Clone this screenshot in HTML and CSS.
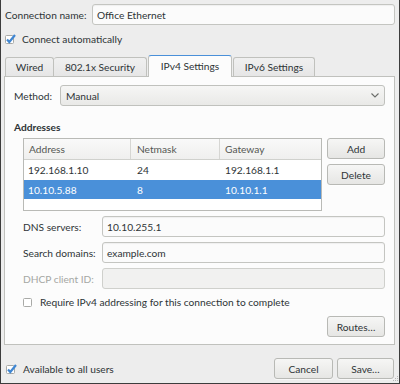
FILE: index.html
```html
<!DOCTYPE html>
<html>
<head>
<meta charset="utf-8">
<link rel="stylesheet" href="styles.css">
</head>
<body>
<div class="win">
  <div class="name-row">
    <span class="name-lbl">Connection name:</span>
    <div class="entry">Office Ethernet</div>
  </div>
  <div class="check-row top-check">
    <span class="cb"><svg width="12" height="12" viewBox="0 0 12 12"><rect x="0.5" y="2.5" width="8" height="8" rx="1" fill="#fff" stroke="#a9aaa7"/><path d="M2 6.5 L4.3 9 L10 2" fill="none" stroke="#3f86d2" stroke-width="2.2"/></svg></span>
    <span>Connect automatically</span>
  </div>
  <div class="tabs">
    <div class="tab t-wired">Wired</div>
    <div class="tab t-sec">802.1x Security</div>
    <div class="tab active t-ipv4">IPv4 Settings</div>
    <div class="tab t-ipv6">IPv6 Settings</div>
  </div>
  <div class="panel">
    <div class="method-row">
      <span class="method-lbl">Method:</span>
      <div class="combo">
        <span>Manual</span>
        <svg width="8" height="5" viewBox="0 0 8 5"><path d="M0.5 0.5 L4 4 L7.5 0.5" fill="none" stroke="#6b6d6a" stroke-width="1.1"/></svg>
      </div>
    </div>
    <div class="section-title">Addresses</div>
    <div class="addr">
      <div class="table">
        <div class="trow thead"><div class="c c1">Address</div><div class="c c2">Netmask</div><div class="c c3">Gateway</div></div>
        <div class="trow r1"><div class="c c1">192.168.1.10</div><div class="c c2">24</div><div class="c c3">192.168.1.1</div></div>
        <div class="trow r2 sel"><div class="c c1">10.10.5.88</div><div class="c c2">8</div><div class="c c3">10.10.1.1</div></div>
      </div>
      <div class="side-btns">
        <div class="btn">Add</div>
        <div class="btn">Delete</div>
      </div>
    </div>
    <div class="field-row">
      <span class="flbl">DNS servers:</span>
      <div class="entry">10.10.255.1</div>
    </div>
    <div class="field-row">
      <span class="flbl">Search domains:</span>
      <div class="entry">example.com</div>
    </div>
    <div class="field-row disabled">
      <span class="flbl">DHCP client ID:</span>
      <div class="entry"></div>
    </div>
    <div class="check-row req">
      <span class="cb"><svg width="12" height="12" viewBox="0 0 12 12"><rect x="0.5" y="2.5" width="8" height="8" rx="1" fill="#fff" stroke="#a9aaa7"/></svg></span>
      <span>Require IPv4 addressing for this connection to complete</span>
    </div>
    <div class="routes-row">
      <div class="btn">Routes…</div>
    </div>
  </div>
  <div class="bottom-row">
    <span class="cb"><svg width="12" height="12" viewBox="0 0 12 12"><rect x="0.5" y="2.5" width="8" height="8" rx="1" fill="#fff" stroke="#a9aaa7"/><path d="M2 6.5 L4.3 9 L10 2" fill="none" stroke="#3f86d2" stroke-width="2.2"/></svg></span>
    <span class="avail">Available to all users</span>
    <div class="btn cancel">Cancel</div>
    <div class="btn save">Save…</div>
  </div>
  <svg class="grip" width="7" height="7" viewBox="0 0 7 7">
    <rect x="5" y="0" width="1" height="1" fill="#b5b5b5"/>
    <rect x="3" y="2" width="1" height="1" fill="#b5b5b5"/><rect x="5" y="2" width="1" height="1" fill="#b5b5b5"/>
    <rect x="1" y="4" width="1" height="1" fill="#b5b5b5"/><rect x="3" y="4" width="1" height="1" fill="#b5b5b5"/><rect x="5" y="4" width="1" height="1" fill="#b5b5b5"/>
  </svg>
</div>
</body>
</html>
```
FILE: styles.css
```css
html, body {
  margin: 0;
  padding: 0;
  background: #ededed;
}
body {
  font-family: Lato, "Open Sans", "DejaVu Sans", sans-serif;
  font-size: 10.2px;
  color: #2e3436;
  white-space: nowrap;
}
.win {
  position: relative;
  width: 400px;
  height: 384px;
  box-sizing: border-box;
  border: 1px solid #3c3c3c;
  border-top: 0;
  padding: 4px 4px 0 3px;
  background: #ededed;
  display: flex;
  flex-direction: column;
}
.entry {
  flex: 1;
  height: 21px;
  box-sizing: border-box;
  border: 1px solid #c4c5c1;
  border-radius: 3px;
  background: #fbfbfb;
  box-shadow: inset 0 1px 1px rgba(0,0,0,0.05);
  padding: 0 4px;
  display: flex;
  align-items: center;
}
.name-row {
  display: flex;
  align-items: center;
  height: 21px;
  padding-left: 1px;
}
.name-lbl {
  width: 87px;
}
.check-row {
  display: flex;
  align-items: center;
  height: 18px;
}
.cb {
  width: 17px;
  height: 12px;
  display: flex;
  align-items: flex-start;
}
.cb svg { display: block; }
.top-check {
  margin-top: 5px;
  padding-left: 1px;
}
.tabs {
  display: flex;
  align-items: flex-end;
  margin-top: 7px;
  padding-left: 1px;
  height: 21px;
  position: relative;
  z-index: 1;
}
.tab {
  height: 19px;
  box-sizing: border-box;
  border: 1px solid #c0c1bd;
  border-bottom: 0;
  border-left-width: 0;
  border-radius: 3px 3px 0 0;
  background: linear-gradient(#f0f0f0, #e6e6e6);
  display: flex;
  align-items: center;
  justify-content: center;
}
.t-wired { width: 49px; border-left-width: 1px; }
.t-sec { width: 93px; }
.t-ipv4 { width: 84px; }
.t-ipv6 { width: 82px; }
.tab.active {
  height: 22px;
  margin-bottom: -1px;
  margin-left: 1px;
  border-left-width: 1px;
  border-top: 1px solid #4a90d9;
  background: #fcfcfc;
  padding-bottom: 1px;
}
.tab.active + .tab { margin-left: 1px; border-left-width: 1px; }
.panel {
  height: 269px;
  box-sizing: border-box;
  border: 1px solid #c0c1bd;
  background: #fcfcfc;
  padding: 8px 9px 0 9px;
  display: flex;
  flex-direction: column;
}
.method-row {
  display: flex;
  align-items: center;
  height: 21px;
}
.method-lbl {
  width: 46px;
}
.combo {
  flex: 1;
  height: 21px;
  box-sizing: border-box;
  border: 1px solid #c0c1bd;
  border-radius: 3px;
  background: linear-gradient(#f6f6f5, #e9e9e7);
  padding: 0 5px 0 5px;
  display: flex;
  align-items: center;
  justify-content: space-between;
}
.section-title {
  font-weight: bold;
  margin-top: 14px;
  height: 14px;
  line-height: 14px;
}
.addr {
  display: flex;
  margin-top: 4px;
  padding-left: 9px;
  gap: 5px;
}
.table {
  width: 300px;
  height: 73px;
  box-sizing: border-box;
  border: 1px solid #b9bab6;
  background: #ffffff;
}
.trow {
  display: flex;
  height: 20px;
  align-items: center;
}
.trow.r2 { height: 19px; }
.c { box-sizing: border-box; height: 100%; display: flex; align-items: center; }
.c1 { width: 107px; padding-left: 4px; }
.c2 { width: 89px; padding-left: 6px; }
.c3 { flex: 1; padding-left: 5px; }
.thead {
  height: 20px;
  border-bottom: 1px solid #d0d1cd;
  background: linear-gradient(#f9f9f9, #efefee);
  color: #555753;
}
.thead .c1, .thead .c2 { border-right: 1px solid #d6d6d3; }
.thead .c1 { padding-left: 5px; }
.trow.sel {
  background: #4a90d9;
  color: #ffffff;
}
.side-btns {
  display: flex;
  flex-direction: column;
  gap: 5px;
}
.btn {
  height: 21px;
  box-sizing: border-box;
  border: 1px solid #b8b9b5;
  border-radius: 3px;
  background: linear-gradient(#f6f6f5, #e6e6e4);
  box-shadow: 0 1px 0 rgba(255,255,255,0.6);
  display: flex;
  align-items: center;
  justify-content: center;
  color: #2e3436;
}
.side-btns .btn { width: 58px; }
.field-row {
  display: flex;
  align-items: center;
  margin-top: 5px;
  padding-left: 9px;
  height: 21px;
}
.flbl { width: 79px; }
.disabled .flbl { color: #a5a7a3; }
.disabled .entry {
  background: #f1f1f0;
  border-color: #cfd0cc;
  box-shadow: none;
}
.req {
  margin-top: 4px;
  padding-left: 9px;
}
.routes-row {
  display: flex;
  justify-content: flex-end;
  margin-top: 5px;
}
.routes-row .btn { width: 58px; }
.bottom-row {
  display: flex;
  align-items: center;
  margin-top: 13px;
  height: 21px;
  padding-left: 2px;
  padding-right: 1px;
}
.avail { flex: 1; }
.cancel { width: 59px; margin-right: 4px; }
.save { width: 57px; }
.grip {
  position: absolute;
  right: 0;
  bottom: 0;
}
```
